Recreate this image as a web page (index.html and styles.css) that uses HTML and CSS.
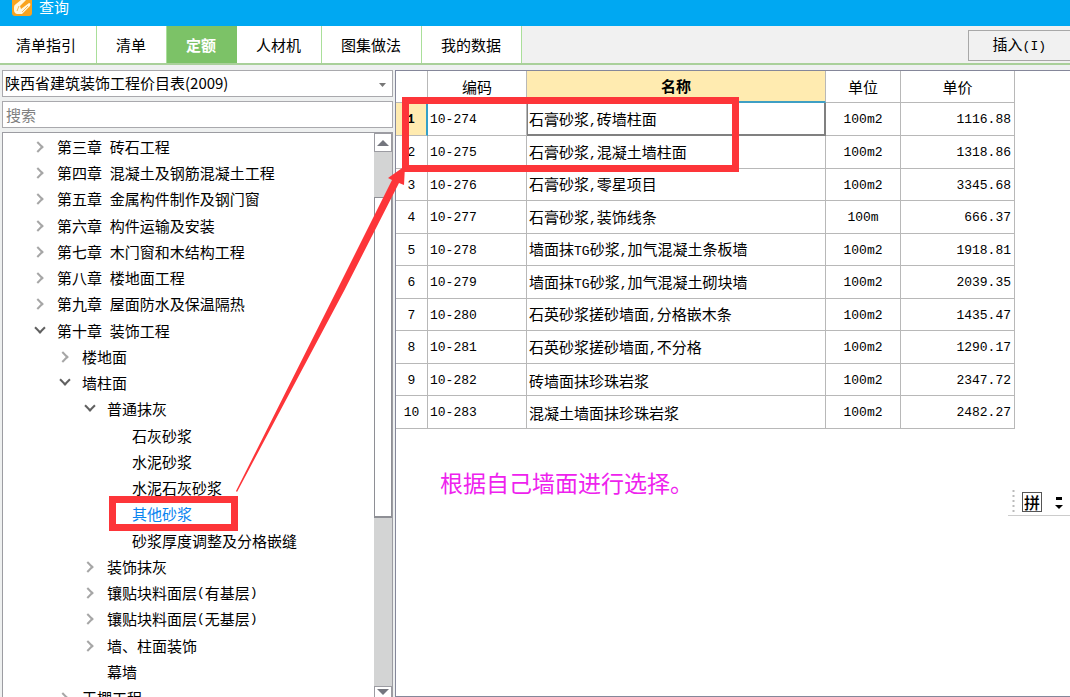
FILE: index.html
```html
<!DOCTYPE html>
<html lang="zh-CN">
<head>
<meta charset="utf-8">
<title>查询</title>
<link rel="stylesheet" href="styles.css">
</head>
<body>
<header class="titlebar">
  <svg class="logo" width="20" height="20" viewBox="0 0 20 20" aria-hidden="true">
    <rect width="20" height="19" rx="3" fill="#f9a31f"/>
    <path d="M2 10Q2 8 4 7L9 3h5L8 9l1 3 8-6q2 0 1 3l-8 8H5Q2 16 2 13z" fill="#fff7e2"/>
    <path d="M5 14l2-5M10 15l6-6" stroke="#f7b95c" stroke-width="1"/>
  </svg>
  <span>查询</span>
</header>
<nav class="toolbar">
  <div class="tabs">
    <button class="tab">清单指引</button>
    <button class="tab">清单</button>
    <button class="tab active">定额</button>
    <button class="tab">人材机</button>
    <button class="tab">图集做法</button>
    <button class="tab">我的数据</button>
  </div>
  <button class="insert">插入<span class="half">(I)</span></button>
</nav>
<main class="workspace">
  <aside class="sidebar">
    <div class="combo">
      <select aria-label="价目表"><option>陕西省建筑装饰工程价目表(2009)</option></select>
      <svg class="caret" width="7" height="4" viewBox="0 0 7 4" aria-hidden="true"><path d="M0 0h7L3.500 4z" fill="#777"/></svg>
    </div>
    <input class="search" type="text" placeholder="搜索" aria-label="搜索">
    <div class="tree-box">
      <ul class="tree">
        <li class="l1"><button class="toggle" aria-label="展开"></button>第三章<span class="half"> </span>砖石工程</li>
        <li class="l1"><button class="toggle" aria-label="展开"></button>第四章<span class="half"> </span>混凝土及钢筋混凝土工程</li>
        <li class="l1"><button class="toggle" aria-label="展开"></button>第五章<span class="half"> </span>金属构件制作及钢门窗</li>
        <li class="l1"><button class="toggle" aria-label="展开"></button>第六章<span class="half"> </span>构件运输及安装</li>
        <li class="l1"><button class="toggle" aria-label="展开"></button>第七章<span class="half"> </span>木门窗和木结构工程</li>
        <li class="l1"><button class="toggle" aria-label="展开"></button>第八章<span class="half"> </span>楼地面工程</li>
        <li class="l1"><button class="toggle" aria-label="展开"></button>第九章<span class="half"> </span>屋面防水及保温隔热</li>
        <li class="l1"><button class="toggle open" aria-label="折叠"></button>第十章<span class="half"> </span>装饰工程</li>
        <li class="l2"><button class="toggle" aria-label="展开"></button>楼地面</li>
        <li class="l2"><button class="toggle open" aria-label="折叠"></button>墙柱面</li>
        <li class="l3"><button class="toggle open" aria-label="折叠"></button>普通抹灰</li>
        <li class="l4">石灰砂浆</li>
        <li class="l4">水泥砂浆</li>
        <li class="l4">水泥石灰砂浆</li>
        <li class="l4 current">其他砂浆</li>
        <li class="l4">砂浆厚度调整及分格嵌缝</li>
        <li class="l3"><button class="toggle" aria-label="展开"></button>装饰抹灰</li>
        <li class="l3"><button class="toggle" aria-label="展开"></button>镶贴块料面层<span class="half">(</span>有基层<span class="half">)</span></li>
        <li class="l3"><button class="toggle" aria-label="展开"></button>镶贴块料面层<span class="half">(</span>无基层<span class="half">)</span></li>
        <li class="l3"><button class="toggle" aria-label="展开"></button>墙、柱面装饰</li>
        <li class="l3 leaf">幕墙</li>
        <li class="l2"><button class="toggle" aria-label="展开"></button>天棚工程</li>
      </ul>
      <div class="scrollbar">
        <button class="scroll-btn" aria-label="向上滚动"><svg width="12" height="6" viewBox="0 0 12 6"><path d="M0 6h12L6 0z" fill="#74767e"/></svg></button>
        <div class="thumb"></div>
        <button class="scroll-btn down" aria-label="向下滚动"><svg width="12" height="6" viewBox="0 0 12 6"><path d="M0 0h12L6 6z" fill="#74767e"/></svg></button>
      </div>
    </div>
  </aside>
  <section class="grid-panel">
    <table class="grid">
      <colgroup><col class="c-no"><col class="c-code"><col class="c-name"><col class="c-unit"><col class="c-price"></colgroup>
      <thead><tr><th></th><th>编码</th><th class="sorted">名称</th><th>单位</th><th>单价</th></tr></thead>
      <tbody>
        <tr class="selected"><th>1</th><td class="mono">10-274</td><td class="name">石膏砂浆<span class="half">,</span>砖墙柱面</td><td class="mono unit">100m2</td><td class="mono price">1116.88</td></tr>
        <tr><th>2</th><td class="mono">10-275</td><td class="name">石膏砂浆<span class="half">,</span>混凝土墙柱面</td><td class="mono unit">100m2</td><td class="mono price">1318.86</td></tr>
        <tr><th>3</th><td class="mono">10-276</td><td class="name">石膏砂浆<span class="half">,</span>零星项目</td><td class="mono unit">100m2</td><td class="mono price">3345.68</td></tr>
        <tr><th>4</th><td class="mono">10-277</td><td class="name">石膏砂浆<span class="half">,</span>装饰线条</td><td class="mono unit">100m</td><td class="mono price">666.37</td></tr>
        <tr><th>5</th><td class="mono">10-278</td><td class="name">墙面抹<span class="half">TG</span>砂浆<span class="half">,</span>加气混凝土条板墙</td><td class="mono unit">100m2</td><td class="mono price">1918.81</td></tr>
        <tr><th>6</th><td class="mono">10-279</td><td class="name">墙面抹<span class="half">TG</span>砂浆<span class="half">,</span>加气混凝土砌块墙</td><td class="mono unit">100m2</td><td class="mono price">2039.35</td></tr>
        <tr><th>7</th><td class="mono">10-280</td><td class="name">石英砂浆搓砂墙面<span class="half">,</span>分格嵌木条</td><td class="mono unit">100m2</td><td class="mono price">1435.47</td></tr>
        <tr><th>8</th><td class="mono">10-281</td><td class="name">石英砂浆搓砂墙面<span class="half">,</span>不分格</td><td class="mono unit">100m2</td><td class="mono price">1290.17</td></tr>
        <tr><th>9</th><td class="mono">10-282</td><td class="name">砖墙面抹珍珠岩浆</td><td class="mono unit">100m2</td><td class="mono price">2347.72</td></tr>
        <tr><th>10</th><td class="mono">10-283</td><td class="name">混凝土墙面抹珍珠岩浆</td><td class="mono unit">100m2</td><td class="mono price">2482.27</td></tr>
      </tbody>
    </table>
  </section>
</main>
<div class="ime">
  <svg width="62" height="30" viewBox="0 0 62 30" aria-hidden="true">
    <path d="M5.500 3v24" stroke="#bbb" stroke-width="2" stroke-dasharray="2 3"/>
    <path d="M0 28.500h62" stroke="#ccc"/>
    <rect x="14.500" y="5.500" width="19" height="19" fill="#fff" stroke="#555"/>
    <path d="M48 10h6v3h-6zM47 18h8l-4 4z" fill="#000"/>
  </svg>
  <span class="ime-mode">拼</span>
</div>
<p class="note">根据自己墙面进行选择。</p>
<svg class="marks" width="760" height="540" viewBox="0 0 760 540" aria-hidden="true">
  <g fill="none" stroke="#fd3539" stroke-width="7">
    <rect x="405.500" y="100.500" width="330" height="68"/>
    <rect x="112.500" y="499.500" width="122" height="28"/>
  </g>
  <path d="M236 491L337 290L392 180L388 178L405 166L404 185L399 183L344 291L237 492z" fill="#fd3539"/>
</svg>
</body>
</html>
```
FILE: styles.css
```css
*, *::before { box-sizing: border-box; }

body {
  margin: 0;
  height: 100vh;
  display: flex;
  flex-direction: column;
  overflow: hidden;
  position: relative;
  background: #eef0f0;
  color: #000;
  font: 15px/20px "Noto Sans CJK SC", sans-serif;
}

button, input, select { font: inherit; color: inherit; border-radius: 0; margin: 0; }

.half, .mono { font-family: "Liberation Mono", "Noto Sans CJK SC", monospace; font-size: 13px; }
.half { white-space: pre; }

.titlebar {
  flex: none;
  height: 26px;
  display: flex;
  align-items: center;
  gap: 7px;
  padding: 0 12px 12px;
  background: #00a8f2;
  color: #fff;
  line-height: 14px;
}
.logo { flex: none; }

.toolbar {
  flex: none;
  height: 39px;
  display: flex;
  justify-content: space-between;
  background: #f1f1f1;
  border-bottom: 2px solid #a9d09a;
}
.tabs { display: flex; }
.tab {
  padding: 0 20px 0 19px;
  border: 0;
  border-right: 1px solid #aadf9a;
  background: #fff;
}
.tab:first-child { padding-left: 16px; }
.tab.active { background: #7cc267; border-color: #7cc267; color: #fff; font-weight: bold; }
.insert {
  align-self: flex-start;
  height: 31px;
  margin-top: 4px;
  padding: 0 24px;
  border: 1px solid #a8a8a8;
  border-right: 0;
  background: #f1f1f1;
}

.workspace {
  flex: 1;
  min-height: 0;
  display: flex;
  gap: 2px;
  padding: 5px 0 0 2px;
}

.sidebar {
  flex: none;
  width: 391px;
  display: flex;
  flex-direction: column;
  gap: 4px;
}
.combo { flex: none; height: 27px; display: flex; position: relative; }
.combo select {
  flex: 1;
  appearance: none;
  padding: 0 24px 2px 2px;
  border: 1px solid #a9a9ad;
  background: #fff;
}
.caret { position: absolute; right: 7px; top: 13px; }
.search {
  flex: none;
  height: 27px;
  padding: 0 3px;
  border: 1px solid #a9a9ad;
  background: #fff;
}
.search::placeholder { color: #808080; opacity: 1; }

.tree-box {
  flex: 1;
  min-height: 0;
  display: flex;
  border: 1px solid #9c9ca2;
  border-bottom: 0;
  background: #fff;
}
.tree {
  flex: 1;
  margin: 0;
  padding: 1px 0 0;
  list-style: none;
  overflow: hidden;
}
.tree li { display: flex; align-items: center; height: 26px; white-space: pre; }
.tree li:nth-child(4n) { height: 27px; }
.l1 { padding-left: 29px; }
.l2 { padding-left: 54px; }
.l3 { padding-left: 79px; }
.l4 { padding-left: 129px; }
.tree .leaf { padding-left: 104px; }
.current { color: #0a84f0; }

.toggle {
  flex: none;
  width: 16px;
  height: 16px;
  margin-right: 9px;
  padding: 0 4px 0 0;
  border: 0;
  background: none;
  display: grid;
  place-items: center;
}
.toggle::before {
  content: "";
  width: 8px;
  height: 8px;
  border: solid #a6a6a6;
  border-width: 2px 2px 0 0;
  transform: rotate(45deg);
}
.toggle.open { padding: 0 0 6px; }
.toggle.open::before { border-color: #606060; transform: rotate(135deg); }

.scrollbar {
  flex: none;
  width: 18px;
  display: flex;
  flex-direction: column;
  background: #d3d4d4;
}
.scroll-btn {
  flex: none;
  height: 19px;
  padding: 0;
  display: grid;
  place-items: center;
  border: 1px solid #9c9ca2;
  background: #fff;
}
.scroll-btn.down { height: 11px; margin-top: auto; border-bottom: 0; }
.thumb {
  height: 321px;
  margin-top: 45px;
  border: 1px solid #8e8f95;
  border-bottom-width: 2px;
  background: #fff;
}

.grid-panel {
  flex: 1;
  min-width: 0;
  border: 1px solid #85879a;
  border-right: 0;
  background: #fff;
}
.grid { width: 619px; table-layout: fixed; border-collapse: separate; border-spacing: 0; }
.c-no { width: 32px; }
.c-code { width: 99px; }
.c-name { width: 299px; }
.c-unit { width: 75px; }
.c-price { width: 114px; }
.grid th, .grid td {
  padding: 2px 2px 0;
  border: solid #b8b8b8;
  border-width: 0 1px 1px 0;
  font-weight: normal;
  text-align: left;
  white-space: nowrap;
}
.grid tr { height: 32px; }
.grid tbody tr:nth-child(even) { height: 33px; }
.grid th { text-align: center; }
.grid thead th { padding-top: 0; }
.grid tbody th { font-family: "Liberation Mono", monospace; font-size: 13px; padding: 2px 0 0; }
.grid .unit { text-align: center; }
.grid .price { text-align: right; padding-right: 3px; }
.grid .sorted { background: #ffebb0; font-weight: bold; border-bottom: 2px solid #3f9fc4; }
.grid .selected { height: 33px; }
.grid .selected th { background: #ffebb0; font-weight: bold; border-right: 2px solid #34a0c8; }
.grid .selected .name { box-shadow: inset 1px 0 #808080, inset 0 -1px #808080, inset -1px 0 #808080; border-color: #808080; }

.ime { position: absolute; right: 0; top: 487px; width: 62px; height: 30px; }
.ime-mode { position: absolute; left: 16px; top: 5px; font-size: 16px; font-weight: 500; }

.note {
  position: absolute;
  left: 440px;
  top: 468px;
  margin: 0;
  color: #ee22ee;
  font-size: 23px;
  line-height: 28px;
}
.marks { position: absolute; left: 0; top: 0; pointer-events: none; }
```
